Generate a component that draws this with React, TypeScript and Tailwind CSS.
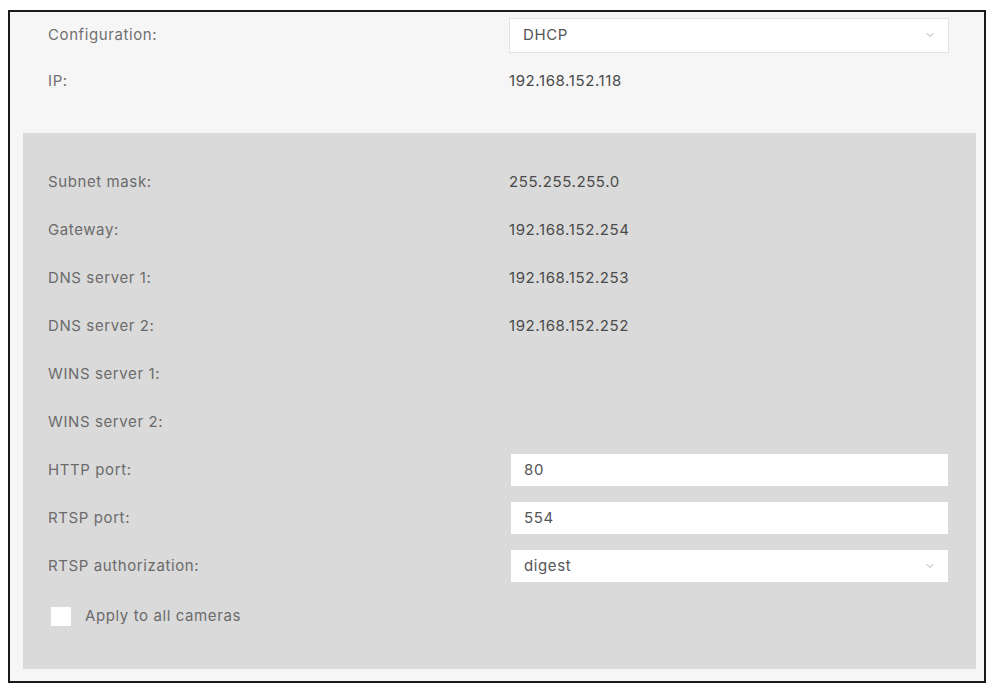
import { ChevronDown } from 'lucide-react'

type Row = {
    label: string
    value?: string
    kind?: 'text' | 'input' | 'select'
}

const panelRows: Row[] = [
    { label: 'Subnet mask:', value: '255.255.255.0' },
    { label: 'Gateway:', value: '192.168.152.254' },
    { label: 'DNS server 1:', value: '192.168.152.253' },
    { label: 'DNS server 2:', value: '192.168.152.252' },
    { label: 'WINS server 1:' },
    { label: 'WINS server 2:' },
    { label: 'HTTP port:', value: '80', kind: 'input' },
    { label: 'RTSP port:', value: '554', kind: 'input' },
    { label: 'RTSP authorization:', value: 'digest', kind: 'select' },
]

function Field({ row }: { row: Row }) {
    if (row.kind === 'input') {
        return (
            <div className="ml-[2px] flex h-[32px] w-[437px] items-center bg-white px-[13px] text-[#555]">
                {row.value}
            </div>
        )
    }
    if (row.kind === 'select') {
        return (
            <div className="ml-[2px] flex h-[32px] w-[437px] items-center justify-between bg-white pl-[13px] pr-[12px] text-[#555]">
                <span>{row.value}</span>
                <ChevronDown className="h-3 w-3 text-[#aaa]" strokeWidth={2} />
            </div>
        )
    }
    return <span className="text-[#4a4a4a]">{row.value}</span>
}

export default function App() {
    return (
        <div className="min-h-[690px] bg-white pt-[10px] pl-[8px]" style={{ fontFamily: 'Inter, "Liberation Sans", sans-serif' }}>
            <div className="flex h-[673px] w-[978px] flex-col border-2 border-[#1a1a1a] bg-[#f6f6f6] text-[15px] tracking-[0.04em]">
                {/* Top: mode + address */}
                <div className="flex h-[46px] items-center pl-[38px]">
                    <span className="w-[461px] text-[#707070]">Configuration:</span>
                    <div className="flex h-[35px] w-[440px] items-center justify-between border border-[#e2e2e2] bg-white pl-[13px] pr-[12px] text-[#555]">
                        <span>DHCP</span>
                        <ChevronDown className="h-3 w-3 text-[#aaa]" strokeWidth={2} />
                    </div>
                </div>
                <div className="flex h-[46px] items-center pl-[38px]">
                    <span className="w-[461px] text-[#707070]">IP:</span>
                    <span className="text-[#4a4a4a]">192.168.152.118</span>
                </div>

                {/* Static settings panel */}
                <div className="mt-[29px] mr-[8px] ml-[13px] flex-1 bg-[#dadada] pt-[25px] pl-[25px]">
                    {panelRows.map((row) => (
                        <div key={row.label} className="flex h-[48px] items-center">
                            <span className="w-[461px] text-[#6b6b6b]">{row.label}</span>
                            <Field row={row} />
                        </div>
                    ))}
                    <label className="flex h-[52px] items-center gap-[14px] pl-[3px]">
                        <span className="h-[19px] w-[20px] bg-white" />
                        <span className="text-[#6b6b6b]">Apply to all cameras</span>
                    </label>
                </div>
                <div className="h-[12px]" />
            </div>
        </div>
    )
}
